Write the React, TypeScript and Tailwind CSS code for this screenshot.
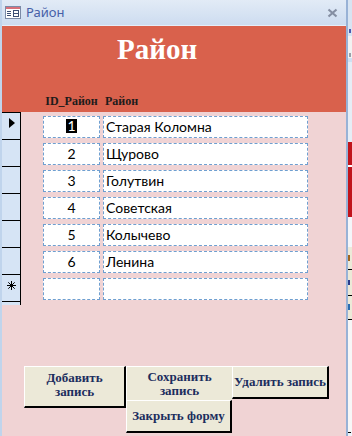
import React from 'react'

const rows = [
  { id: '1', name: 'Старая Коломна' },
  { id: '2', name: 'Щурово' },
  { id: '3', name: 'Голутвин' },
  { id: '4', name: 'Советская' },
  { id: '5', name: 'Колычево' },
  { id: '6', name: 'Ленина' },
  { id: '', name: '' },
]

const serif = "font-['Liberation_Serif','DejaVu_Serif',serif]"
const btn =
  "flex items-center justify-center border-t border-l border-t-white border-l-white border-r-2 border-b-2 border-r-black border-b-black bg-[#ece9d8] text-center text-[13px] font-bold leading-[14px] text-[#1c2e5e] " +
  serif

function FormIcon() {
  return (
    <svg width="16" height="13" viewBox="0 0 16 13">
      <rect x="0.5" y="0.5" width="15" height="12" fill="#fff" stroke="#7b8aa6" />
      <rect x="1" y="1" width="14" height="2" fill="#d7707a" />
      <path d="M2 5.5h4M2 7.5h4M2 9.5h4" stroke="#3d4f73" />
      <rect x="8.5" y="4.5" width="5" height="6" fill="none" stroke="#3d4f73" />
      <path d="M8.5 7.5h5" stroke="#3d4f73" />
    </svg>
  )
}

function CloseIcon() {
  return (
    <svg width="11" height="10" viewBox="0 0 11 10">
      <path d="M1.5 1.5l8 7M9.5 1.5l-8 7" stroke="#858fa3" strokeWidth="2.2" />
    </svg>
  )
}

function NewRecordIcon() {
  return (
    <svg width="9" height="9" viewBox="0 0 9 9">
      <path d="M4.5 0v9M0 4.5h9M1.3 1.3l6.4 6.4M7.7 1.3l-6.4 6.4" stroke="#000" strokeWidth="1" />
    </svg>
  )
}

function SideStrip() {
  // кусок соседнего окна справа
  return (
    <div className="flex w-[4px] flex-col bg-[#eef2f8]">
      <div className="h-[26px] bg-[#d8e4f2]" />
      <div className="h-[10px] bg-[#d8e4f2]">
        <div className="ml-[1px] mt-[3px] h-[4px] w-[2px] bg-[#4a5ab0]" />
      </div>
      <div className="h-[22px] bg-[#f2f2f2]">
        <div className="ml-[1px] mt-[17px] h-[4px] w-[2px] bg-[#9aa0aa]" />
      </div>
      <div className="h-[4px] bg-[#cfe0f2]" />
      <div className="h-[80px] bg-[#e6edf6]" />
      <div className="h-[23px] bg-[#c0141c]" />
      <div className="h-[2px] bg-white" />
      <div className="h-[50px] bg-[#c0141c]" />
      <div className="h-[30px] bg-[#f4f6fa]" />
      <div className="h-[23px] border-b border-black bg-[#ece9d8]">
        <div className="mt-[8px] h-[6px] w-[2px] bg-[#a0641e]" />
      </div>
      <div className="h-[26px] border-b border-black bg-[#ece9d8]">
        <div className="mt-[10px] h-[5px] w-[2px] bg-[#2a3c8c]" />
      </div>
      <div className="h-[24px] border-b border-black bg-[#ece9d8]">
        <div className="mt-[8px] h-[6px] w-[2px] bg-[#2a6cb0]" />
      </div>
      <div className="flex-1 bg-[#f7f7f7]" />
      <div className="mb-[3px] h-[1px] w-[3px] bg-black" />
    </div>
  )
}

export default function App() {
  return (
    <div className="flex h-[436px] w-[352px] overflow-hidden">
      <div className="flex w-[348px] flex-col border-l-2 border-r-2 border-l-[#c0d4ec] border-r-[#98b2d6]">
        <div className="flex h-[26px] shrink-0 items-center border-b border-b-[#e6eef9] bg-gradient-to-b from-[#e2ebf6] to-[#cddcf0] pl-[3px] pr-[8px]">
          <FormIcon />
          <span className="ml-[5px] font-['Noto_Sans',sans-serif] text-[13px] leading-none text-[#4660a8]">Район</span>
          <span className="ml-auto mt-[1px]">
            <CloseIcon />
          </span>
        </div>

        <div className="flex flex-1 flex-col bg-[#f0d3d4]">
          <div className="flex h-[86px] shrink-0 flex-col bg-[#d9614c]">
            <div className={`pl-[115px] pt-[7px] text-[29px] font-bold leading-[32px] text-white ${serif}`}>Район</div>
            <div className={`mt-auto flex pb-[4px] text-[12px] font-bold leading-[14px] text-[#1e1b1b] ${serif}`}>
              <div className="w-[41px]" />
              <div className="w-[57px] text-center">ID_Район</div>
              <div className="ml-[3px] pl-[2px]">Район</div>
            </div>
          </div>

          <div className="flex">
            <div className="flex w-[19px] flex-col border-t border-r border-black bg-[#d6e4f5]">
              {rows.map((r, i) => (
                <div key={i} className="flex h-[27px] items-center justify-center border-b border-black">
                  {i === 0 && (
                    <svg width="8" height="10" viewBox="0 0 8 10" className="-mt-[6px] ml-[1px]">
                      <path d="M1 0l6 5-6 5z" fill="#000" />
                    </svg>
                  )}
                  {i === rows.length - 1 && (
                    <span className="-mt-[6px]">
                      <NewRecordIcon />
                    </span>
                  )}
                </div>
              ))}
            </div>

            <div className="flex flex-col pl-[22px] pt-[4px] font-['Lato','Noto_Sans',sans-serif] text-[14px] text-black">
              {rows.map((r, i) => (
                <div key={i} className="flex h-[27px] gap-[3px]">
                  <div className="flex h-[22px] w-[57px] justify-center border border-dashed border-[#6f9fd0] bg-white pt-[2px] leading-[16px]">
                    {i === 0 ? <span className="h-[14px] bg-black px-[1px] leading-[14px] text-white">{r.id}</span> : r.id}
                  </div>
                  <div className="h-[22px] w-[205px] border border-dashed border-[#6f9fd0] bg-white pl-[2px] pt-[2px] leading-[16px]">
                    {r.name}
                  </div>
                </div>
              ))}
            </div>
          </div>

          <div className="mt-[61px] flex items-start pl-[22px]">
            <div className={`${btn} h-[42px] w-[102px] !items-start pt-[4px]`}>
              Добавить
              <br />
              запись
            </div>
            <div className="flex flex-col">
              <div className={`${btn} h-[34px] w-[106px] !border-r-0 !border-b-0`}>
                Сохранить
                <br />
                запись
              </div>
              <div className={`${btn} h-[33px] w-[106px]`}>Закрыть форму</div>
            </div>
            <div className={`${btn} h-[33px] w-[97px]`}>Удалить запись</div>
          </div>
        </div>
      </div>
      <SideStrip />
    </div>
  )
}
